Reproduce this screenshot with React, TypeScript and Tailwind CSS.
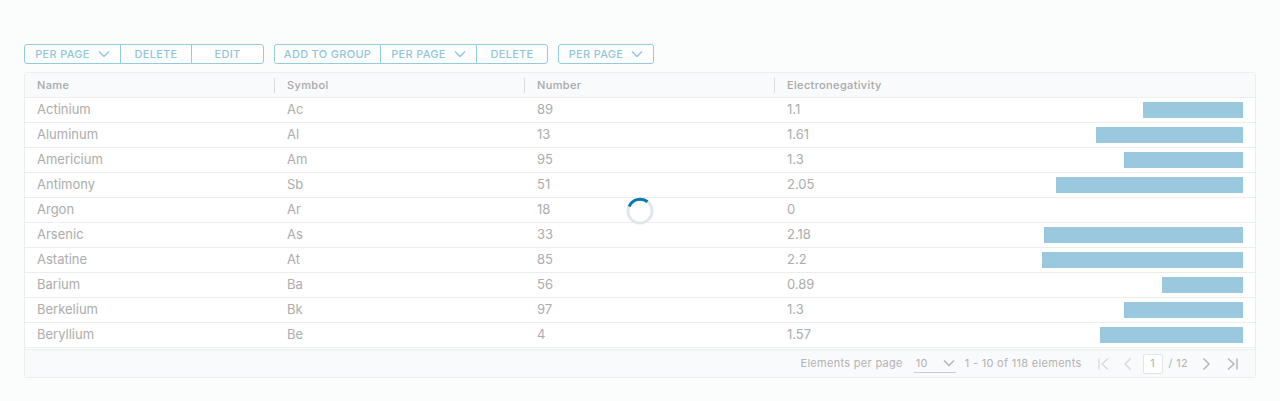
import React from "react";

const rows: [string, string, number, string][] = [
  ["Actinium", "Ac", 89, "1.1"],
  ["Aluminum", "Al", 13, "1.61"],
  ["Americium", "Am", 95, "1.3"],
  ["Antimony", "Sb", 51, "2.05"],
  ["Argon", "Ar", 18, "0"],
  ["Arsenic", "As", 33, "2.18"],
  ["Astatine", "At", 85, "2.2"],
  ["Barium", "Ba", 56, "0.89"],
  ["Berkelium", "Bk", 97, "1.3"],
  ["Beryllium", "Be", 4, "1.57"],
];

const Chevron = ({ className = "" }: { className?: string }) => (
  <svg width="12" height="8" viewBox="0 0 12 8" className={className} fill="none">
    <path d="M1 1.5 L6 6.5 L11 1.5" stroke="currentColor" strokeWidth="1.4" />
  </svg>
);

const Btn = ({ label, w, chevron, first }: { label: string; w: string; chevron?: boolean; first?: boolean }) => (
  <div
    className={`${w} h-full flex items-center justify-center gap-[8px] ${first ? "" : "border-l border-[#94cbe0]"}`}
  >
    <span>{label}</span>
    {chevron && <Chevron />}
  </div>
);

export default function App() {
  return (
    <div
      className="w-[1280px] h-[401px] bg-[#fbfdfd] pt-[44px] px-[24px]"
      style={{ fontFamily: "Inter, Lato, sans-serif" }}
    >
      <div className="flex gap-[10px] h-[20px] text-[11px] font-medium tracking-[0.3px] text-[#8fc6dc]">
        <div className="flex border border-[#94cbe0] rounded-[3px] bg-white">
          <Btn label="PER PAGE" w="w-[95px]" chevron first />
          <Btn label="DELETE" w="w-[71px]" />
          <Btn label="EDIT" w="w-[72px]" />
        </div>
        <div className="flex border border-[#94cbe0] rounded-[3px] bg-white">
          <Btn label="ADD TO GROUP" w="w-[105px]" first />
          <Btn label="PER PAGE" w="w-[96px]" chevron />
          <Btn label="DELETE" w="w-[71px]" />
        </div>
        <div className="flex border border-[#94cbe0] rounded-[3px] bg-white">
          <Btn label="PER PAGE" w="w-[94px]" chevron first />
        </div>
      </div>

      <div className="relative mt-[8px] w-[1232px] border border-[#ebeeef] rounded-[3px] bg-white">
        <div className="flex h-[25px] items-center bg-[#f9fafb] border-b border-[#ebeeef] text-[11px] font-medium tracking-[0.35px] text-[#a8a8a8]">
          {["Name", "Symbol", "Number", "Electronegativity"].map((h, i) => (
            <div key={h} className={`${i === 3 ? "flex-1" : "w-[250px]"} flex items-center h-full`}>
              {i > 0 && <div className="w-px h-[15px] bg-[#d9dcde] -ml-px" />}
              <span className="pl-[12px]">{h}</span>
            </div>
          ))}
        </div>
        {rows.map(([n, s, num, e]) => (
          <div key={n} className="flex h-[25px] items-center border-b border-[#ebeeef] text-[13px] text-[#acacac]">
            <div className="w-[250px] pl-[12px]">{n}</div>
            <div className="w-[250px] pl-[12px]">{s}</div>
            <div className="w-[250px] pl-[12px]">{num}</div>
            <div className="flex-1 pl-[12px] flex items-center justify-between pr-[12px]">
              <span>{e}</span>
              <div className="h-[16px] bg-[#9ac8de]" style={{ width: `${parseFloat(e) * 91.2}px` }} />
            </div>
          </div>
        ))}
        <div className="h-[28px] mt-px border-t border-[#ebeeef] bg-[#f9fafb] flex items-center justify-end pr-[16px] text-[11px] tracking-[0.3px] text-[#b3b3b3]">
          <span>Elements per page</span>
          <div className="ml-[11px] w-[42px] h-[19px] border-b border-[#c9cdd0] flex items-center justify-between pl-[2px] pr-[1px]">
            <span>10</span>
            <Chevron />
          </div>
          <span className="ml-[9px]">1 - 10 of 118 elements</span>
          <svg width="14" height="14" viewBox="0 0 14 14" className="ml-[15px] text-[#d5d8da]" fill="none" stroke="currentColor" strokeWidth="1.3">
            <path d="M2 1.5 V12.5" />
            <path d="M11 1.5 L5 7 L11 12.5" />
          </svg>
          <svg width="10" height="14" viewBox="0 0 10 14" className="ml-[12px] text-[#d5d8da]" fill="none" stroke="currentColor" strokeWidth="1.3">
            <path d="M7.5 1.5 L2 7 L7.5 12.5" />
          </svg>
          <div className="ml-[10px] w-[20px] h-[20px] border border-[#e3e6e8] rounded-[2px] bg-white flex items-center justify-center text-[#b3b3b3]">1</div>
          <span className="ml-[6px]">/ 12</span>
          <svg width="10" height="14" viewBox="0 0 10 14" className="ml-[13px] text-[#a8b0b6]" fill="none" stroke="currentColor" strokeWidth="1.3">
            <path d="M2.5 1.5 L8 7 L2.5 12.5" />
          </svg>
          <svg width="14" height="14" viewBox="0 0 14 14" className="ml-[14px] text-[#a8b0b6]" fill="none" stroke="currentColor" strokeWidth="1.3">
            <path d="M3 1.5 L9 7 L3 12.5" />
            <path d="M12 1.5 V12.5" />
          </svg>
        </div>

        <div className="absolute left-[601px] top-[124px] w-[28px] h-[28px]">
          <svg width="28" height="28" viewBox="0 0 28 28">
            <circle cx="14" cy="14" r="12" fill="none" stroke="#e1e8ec" strokeWidth="3" />
            <path d="M3.2 9.5 A12 12 0 0 1 21.5 4.7" fill="none" stroke="#0079ad" strokeWidth="3" />
          </svg>
        </div>
      </div>
    </div>
  );
}
